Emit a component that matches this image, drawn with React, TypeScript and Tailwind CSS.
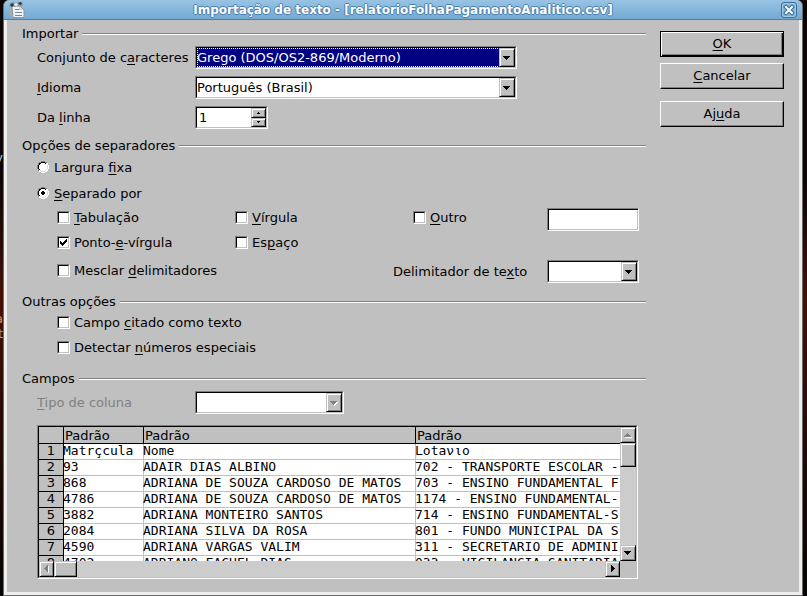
import React from "react";

function Key({ children }: { children: React.ReactNode }) {
  return <span className="underline decoration-1 underline-offset-2">{children}</span>;
}

const sunken =
  "border border-t-[#808080] border-l-[#808080] border-b-white border-r-white";
const sunkenInner =
  "border border-t-black border-l-black border-b-[#c0c0c0] border-r-[#c0c0c0]";
const raised =
  "border border-t-[#c0c0c0] border-l-[#c0c0c0] border-b-black border-r-black bg-[#c0c0c0] shadow-[inset_1px_1px_#ffffff,inset_-1px_-1px_#808080]";

function Section({ title, children, className = "" }: { title: string; children: React.ReactNode; className?: string }) {
  return (
    <fieldset className={`block w-full min-w-0 ${className}`}>
      <legend className="flex h-4 w-full items-center gap-1">
        <span className="whitespace-nowrap">{title}</span>
        <span className="h-0.5 flex-1 border-t border-b border-t-[#808080] border-b-white" />
      </legend>
      {children}
    </fieldset>
  );
}

function Arrow({ dir, color = "#000000" }: { dir: "up" | "down" | "left" | "right"; color?: string }) {
  const shapes = {
    up: "M3 0h1v1h1v1h1v1h1v1H0V3h1V2h1V1h1z",
    down: "M0 0h7v1H6v1H5v1H4v1H3V3H2V2H1V1H0z",
    left: "M3 0h1v7H3V6H2V5H1V4H0V3h1V2h1V1h1z",
    right: "M1 0h1v1h1v1h1v1h1v1H4v1H3v1H2v1H1z",
  };
  const flat = dir === "up" || dir === "down";
  return (
    <svg
      width={flat ? 8 : 5}
      height={flat ? 4 : 8}
      viewBox={flat ? "0 0 8 4" : "0 0 5 8"}
      shapeRendering="crispEdges"
      className="overflow-visible"
    >
      {color !== "#000000" && <path d={shapes[dir]} fill="#ffffff" transform="translate(1 1)" />}
      <path d={shapes[dir]} fill={color} />
    </svg>
  );
}

interface SelectProps {
  id: string;
  options: string[];
  width: string;
  active?: boolean;
  disabled?: boolean;
}

function Select({ id, options, width, active, disabled }: SelectProps) {
  return (
    <div className={`relative h-[23px] shrink-0 ${width} ${sunken}`}>
      <div className={`h-full bg-white ${sunkenInner}`}>
        <select
          id={id}
          disabled={disabled}
          className={`block h-full w-[calc(100%-15px)] appearance-none leading-4 ${
            active
              ? "bg-[#000080] text-white outline-1 -outline-offset-1 outline-white outline-dotted"
              : "bg-white text-black outline-none"
          }`}
        >
          {options.map((option) => (
            <option key={option}>{option}</option>
          ))}
        </select>
      </div>
      <span className={`pointer-events-none absolute top-px right-px bottom-px flex w-4 items-center justify-center ${raised}`}>
        <Arrow dir="down" color={disabled ? "#808080" : "#000000"} />
      </span>
    </div>
  );
}

function Check({ children, checked }: { children: React.ReactNode; checked?: boolean }) {
  return (
    <label className="flex h-5 items-center gap-1 whitespace-nowrap">
      <span className={`relative size-[13px] shrink-0 ${sunken}`}>
        <input type="checkbox" defaultChecked={checked} className={`peer block size-full appearance-none bg-white outline-none ${sunkenInner}`} />
        <svg className="pointer-events-none absolute inset-0 hidden size-full peer-checked:block" viewBox="0 0 11 11" shapeRendering="crispEdges">
          <path d="M2 4h1v1h1v1h1V5h1V4h1V3h1V2h1v3H8v1H7v1H6v1H5v1H4V8H3V7H2z" fill="#000" />
        </svg>
      </span>
      <span className="pt-0.5">{children}</span>
    </label>
  );
}

function Radio({ children, checked }: { children: React.ReactNode; checked?: boolean }) {
  return (
    <label className="flex h-4 items-center gap-[5px]">
      <span className="relative size-3 shrink-0">
        <input type="radio" name="separador" defaultChecked={checked} className="peer block size-3 appearance-none rounded-full outline-none" />
        <svg className="pointer-events-none absolute inset-0" width="12" height="12" viewBox="0 0 12 12" shapeRendering="crispEdges">
          <path d="M4 1h4v1h2v2h1v4h-1v2H8v1H4v-1H2V8H1V4h1V2h2z" fill="#fff" />
          <path d="M4 0h4v1H4zM2 1h2v1H2zM8 1h2v1H8zM1 2h1v2H1zM0 4h1v4H0zM1 8h1v2H1z" fill="#808080" />
          <path d="M4 1h4v1H4zM2 2h2v1H2zM8 2h1v1H8zM2 3h1v1H2zM1 4h1v4H1zM2 8h1v1H2z" fill="#000" />
          <path d="M10 2h1v2h-1zM11 4h1v4h-1zM10 8h1v2h-1zM8 10h2v1H8zM4 11h4v1H4zM2 10h2v1H2z" fill="#fff" />
          <path d="M9 8h1v1H9zM8 9h1v1H8zM4 10h4v1H4zM3 9h1v1H3zM10 4h1v4h-1z" fill="#dfdfdf" />
        </svg>
        <svg className="pointer-events-none absolute inset-0 hidden peer-checked:block" width="12" height="12" viewBox="0 0 12 12" shapeRendering="crispEdges">
          <path d="M5 4h2v1h1v2H7v1H5V7H4V5h1z" fill="#000" />
        </svg>
      </span>
      <span className="pt-0.5">{children}</span>
    </label>
  );
}

function PushButton({ children, primary, className = "" }: { children: React.ReactNode; primary?: boolean; className?: string }) {
  return (
    <button
      type="button"
      className={`h-[26px] w-full border bg-[#c0c0c0] ${
        primary
          ? "border-black shadow-[inset_1px_1px_#ffffff,inset_-1px_-1px_#000000,inset_-2px_-2px_#808080]"
          : "border-t-white border-l-white border-r-black border-b-black shadow-[inset_-1px_-1px_#808080]"
      } ${className}`}
    >
      {children}
    </button>
  );
}

const rows = [
  ["Matrçcula", "Nome", "Lotaνιo"],
  ["93", "ADAIR DIAS ALBINO", "702 - TRANSPORTE ESCOLAR - "],
  ["868", "ADRIANA DE SOUZA CARDOSO DE MATOS", "703 - ENSINO FUNDAMENTAL F"],
  ["4786", "ADRIANA DE SOUZA CARDOSO DE MATOS", "1174 - ENSINO FUNDAMENTAL-"],
  ["3882", "ADRIANA MONTEIRO SANTOS", "714 - ENSINO FUNDAMENTAL-S"],
  ["2084", "ADRIANA SILVA DA ROSA", "801 - FUNDO MUNICIPAL DA S"],
  ["4590", "ADRIANA VARGAS VALIM", "311 - SECRETARIO DE ADMINI"],
  ["4702", "ADRIANO FACHEL DIAS", "033 - VIGILANCIA SANITARIA"],
];

function Preview() {
  const head = "h-[17px] p-0 text-left font-normal whitespace-nowrap leading-4";
  const cell = "h-4 overflow-hidden p-0 align-top whitespace-nowrap leading-[14px]";
  const line = "shadow-[inset_1px_0_#c0c0c0,inset_0_-1px_#c0c0c0]";
  const firstLine = "shadow-[inset_1px_0_#000000,inset_0_-1px_#c0c0c0]";
  return (
    <div className={sunken}>
      <div className={`grid grid-cols-[minmax(0,1fr)_16px] grid-rows-[134px_16px] ${sunkenInner}`}>
        <div className="overflow-hidden bg-white">
          <table className="w-full table-fixed border-separate border-spacing-0">
            <colgroup>
              <col className="w-6" />
              <col className="w-20" />
              <col className="w-[272px]" />
              <col />
            </colgroup>
            <thead className="bg-[#c0c0c0]">
              <tr>
                <th className={`${head} shadow-[inset_0_-1px_#000000]`} aria-label="Linha" />
                {[0, 1, 2].map((i) => (
                  <th key={i} scope="col" className={`${head} pl-0.5 shadow-[inset_1px_0_#000000,inset_0_-1px_#000000]`}>
                    Padrão
                  </th>
                ))}
              </tr>
            </thead>
            <tbody>
              {rows.map((row, i) => (
                <tr key={i}>
                  <th scope="row" className={`${cell} bg-[#c0c0c0] text-center font-normal shadow-[inset_0_-1px_#000000]`}>
                    {i + 1}
                  </th>
                  {row.map((text, j) => (
                    <td key={j} className={`${cell} font-['DejaVu_Sans_Mono',monospace] ${j === 0 ? firstLine : line}`}>
                      {text}
                    </td>
                  ))}
                </tr>
              ))}
            </tbody>
          </table>
        </div>
        <div className="flex flex-col bg-[#cccccc]">
          <button type="button" aria-label="Rolar para cima" className={`flex h-4 items-center justify-center ${raised}`}>
            <Arrow dir="up" color="#808080" />
          </button>
          <div className={`h-6 ${raised}`} />
          <button type="button" aria-label="Rolar para baixo" className={`mt-auto flex h-4 items-center justify-center ${raised}`}>
            <Arrow dir="down" />
          </button>
        </div>
        <div className="flex bg-[#cccccc]">
          <button type="button" aria-label="Rolar para a esquerda" className={`flex w-[15px] items-center justify-center ${raised}`}>
            <Arrow dir="left" color="#808080" />
          </button>
          <div className={`w-[23px] ${raised}`} />
          <button type="button" aria-label="Rolar para a direita" className={`ml-auto flex w-[15px] items-center justify-center ${raised}`}>
            <Arrow dir="right" />
          </button>
        </div>
        <div className="bg-[#c0c0c0]" />
      </div>
    </div>
  );
}

function DocumentIcon() {
  return (
    <svg width="16" height="17" viewBox="0 0 16 17" className="shrink-0">
      <path d="M1 6v9l3 2V6z" fill="#a3adb3" />
      <path d="M3 5h8l4 4v7.500H4z" fill="#f1f3f4" stroke="#8d989f" strokeWidth="1" />
      <path d="M1 2l3-1 3 1 2-1h4l1 3-2 2-3-1-3 1-3-1-3 1z" fill="#8b979d" />
      <path d="M1 4l2-2 2 2-2 2zM9 2l3-1 1 2-2 1z" fill="#2f3b40" />
      <path d="M5 3l2-1 2 1-1 2-2 0z" fill="#e3e8ea" />
      <path d="M10 5l4 4h-4z" fill="#c7d0d6" />
      <path d="M6 8.500h4M6 11.500h7M6 14.500h7" stroke="#6d8ba3" strokeWidth="1" />
    </svg>
  );
}

export default function App() {
  return (
    <div className="relative flex min-h-screen bg-linear-to-b from-[#0b0505] from-30% via-[#451005] to-[#050303] px-[3px] font-['DejaVu_Sans',sans-serif] text-[13px] leading-4 text-black">
      <div className="absolute inset-y-0 left-0 w-[3px] overflow-hidden" aria-hidden="true">
        <span className="absolute top-[150px] right-0 text-[#a9c6d6]">v</span>
        <span className="absolute top-[311px] right-0 text-[#d09050]">a</span>
        <span className="absolute top-[326px] right-0 text-[#7fb6c4]">t</span>
      </div>
      <main className="relative mr-px flex min-w-0 flex-1 flex-col rounded-t-md border-r border-b border-l border-[#6a6a6a] bg-[#c0c0c0]">
        <header className="flex h-5 items-center rounded-t-md border-b border-[#4a7fb0] bg-linear-to-b from-[#98c3e4] to-[#73a9d2] pr-[5px] pl-[5px]">
          <DocumentIcon />
          <h1 className="min-w-0 flex-1 truncate text-center text-[12px] font-bold text-white [text-shadow:1px_0_#4a80b0,-1px_0_#4a80b0,0_1px_#4a80b0,0_-1px_#4a80b0]">
            Importação de texto - [relatorioFolhaPagamentoAnalitico.csv]
          </h1>
          <button type="button" aria-label="Fechar" className="flex size-4 shrink-0 items-center justify-center rounded-[3px] border border-[#3b6c98] bg-[#82b2d8] shadow-[inset_0_0_0_1px_#a4cbe8]">
            <svg width="12" height="12" viewBox="0 0 12 12" className="shrink-0">
              <path d="M3 3l6 6M9 3l-6 6" stroke="#3b6c98" strokeWidth="4" strokeLinecap="square" />
              <path d="M3 3l6 6M9 3l-6 6" stroke="#fff" strokeWidth="2" strokeLinecap="square" />
            </svg>
          </button>
        </header>
        <form className="flex flex-1 items-start gap-3.5 border-x-[3px] border-b-[3px] border-[#eeeeec] pr-[15px] pb-[13px] pl-[15px]">
          <div className="min-w-0 flex-1 pt-1.5">
            <Section title="Importar">
              <div className="mt-1 grid grid-cols-[158px_minmax(0,1fr)] items-center gap-y-[7px] pl-[15px]">
                <label htmlFor="charset">Conjunto de c<Key>a</Key>racteres</label>
                <Select id="charset" options={["Grego (DOS/OS2-869/Moderno)"]} width="w-[322px]" active />
                <label htmlFor="idioma"><Key>I</Key>dioma</label>
                <Select id="idioma" options={["Português (Brasil)"]} width="w-[322px]" />
                <label htmlFor="linha">Da <Key>l</Key>inha</label>
                <div className={`h-[23px] w-[73px] ${sunken}`}>
                  <div className={`flex h-full bg-white ${sunkenInner}`}>
                    <input id="linha" type="text" inputMode="numeric" defaultValue="1" className="min-w-0 flex-1 bg-white pl-0.5 outline-none" />
                    <div className="flex w-[15px] flex-col">
                      {["M0 2h3V1H2V0H1v1H0z", "M0 0h3v1H2v1H1V1H0z"].map((d, i) => (
                        <button key={d} type="button" aria-label={i ? "Diminuir" : "Aumentar"} className={`flex flex-1 items-center justify-center ${raised}`}>
                          <svg width="3" height="2" viewBox="0 0 3 2" shapeRendering="crispEdges">
                            <path d={d} />
                          </svg>
                        </button>
                      ))}
                    </div>
                  </div>
                </div>
              </div>
            </Section>

            <Section title="Opções de separadores" className="mt-[9px]">
              <div className="mt-[5px] flex flex-col gap-2.5 pl-[15px]">
                <Radio>Largura <Key>f</Key>ixa</Radio>
                <Radio checked><Key>S</Key>eparado por</Radio>
              </div>
              <div className="mt-1.5 grid grid-cols-[178px_178px_1fr_92px] items-start pr-[7px] pl-[35px]">
                <Check><Key>T</Key>abulação</Check>
                <Check><Key>V</Key>írgula</Check>
                <Check><Key>O</Key>utro</Check>
                <input type="text" aria-label="Outro separador" className="mt-px h-[23px] w-full border border-t-[#808080] border-r-white border-b-white border-l-[#808080] bg-white px-0.5 shadow-[inset_1px_1px_#000000,inset_-1px_-1px_#c0c0c0] outline-none" />
              </div>
              <div className="mt-px grid grid-cols-[178px_178px] pl-[35px]">
                <Check checked>Ponto-<Key>e</Key>-vírgula</Check>
                <Check>Es<Key>p</Key>aço</Check>
              </div>
              <div className="mt-2 flex items-start pr-[7px] pl-[35px]">
                <div className="flex-1">
                  <Check>Mesclar <Key>d</Key>elimitadores</Check>
                </div>
                <label htmlFor="delimitador" className="w-[154px] self-center whitespace-nowrap">Delimitador de te<Key>x</Key>to</label>
                <Select id="delimitador" options={[""]} width="w-[92px]" />
              </div>
            </Section>

            <Section title="Outras opções" className="mt-[11px]">
              <div className="mt-0.5 flex flex-col gap-[5px] pl-[35px]">
                <Check>Campo <Key>c</Key>itado como texto</Check>
                <Check>Detectar <Key>n</Key>úmeros especiais</Check>
              </div>
            </Section>

            <Section title="Campos" className="mt-3.5">
              <div className="mt-1 grid grid-cols-[158px_minmax(0,1fr)] items-center pl-[15px]">
                <label htmlFor="tipo" className="text-[#808080]"><Key>T</Key>ipo de coluna</label>
                <Select id="tipo" options={[""]} width="w-[149px]" disabled />
              </div>
              <div className="mt-[11px] pr-2 pl-[15px]">
                <Preview />
              </div>
            </Section>
          </div>
          <div className="w-[124px] shrink-0 pt-[11px]">
            <PushButton primary><Key>O</Key>K</PushButton>
            <PushButton className="mt-1.5"><Key>C</Key>ancelar</PushButton>
            <PushButton className="mt-3">Aj<Key>u</Key>da</PushButton>
          </div>
        </form>
      </main>
    </div>
  );
}
